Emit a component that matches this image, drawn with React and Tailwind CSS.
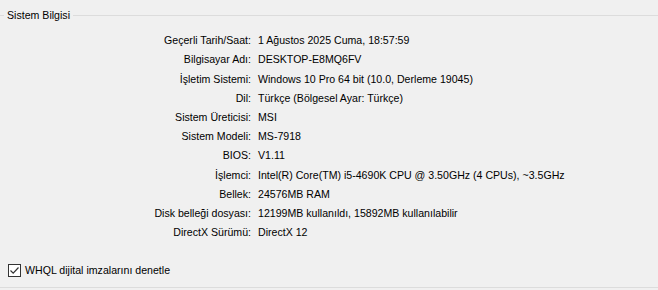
import React from "react";

const rows = [
  ["Geçerli Tarih/Saat:", "1 Ağustos 2025 Cuma, 18:57:59"],
  ["Bilgisayar Adı:", "DESKTOP-E8MQ6FV"],
  ["İşletim Sistemi:", "Windows 10 Pro 64 bit (10.0, Derleme 19045)"],
  ["Dil:", "Türkçe (Bölgesel Ayar: Türkçe)"],
  ["Sistem Üreticisi:", "MSI"],
  ["Sistem Modeli:", "MS-7918"],
  ["BIOS:", "V1.11"],
  ["İşlemci:", "Intel(R) Core(TM) i5-4690K CPU @ 3.50GHz (4 CPUs), ~3.5GHz"],
  ["Bellek:", "24576MB RAM"],
  ["Disk belleği dosyası:", "12199MB kullanıldı, 15892MB kullanılabilir"],
  ["DirectX Sürümü:", "DirectX 12"],
];

const App = () => {
  return (
    <div className="w-[658px] h-[290px] bg-[#f0f0f0] text-black text-[10.6px] leading-none overflow-hidden flex flex-col" style={{ fontFamily: "'Liberation Sans', Arial, sans-serif" }}>
      {/* group box header */}
      <div className="flex items-center h-[14px] mt-[8px] shrink-0">
        <div className="w-[4px] h-px bg-[#dcdcdc]" />
        <span className="px-[3px]">Sistem Bilgisi</span>
        <div className="flex-1 h-px bg-[#dcdcdc]" />
      </div>

      {/* info rows */}
      <div className="grid grid-cols-[251px_1fr] gap-x-[7px] mt-[9px]">
        {rows.map(([label, value]) => (
          <React.Fragment key={label}>
            <div className="text-right h-[19.2px] flex items-center justify-end">{label}</div>
            <div className="h-[19.2px] flex items-center">{value}</div>
          </React.Fragment>
        ))}
      </div>

      {/* checkbox */}
      <div className="flex items-center mt-[22px] ml-[8px]">
        <div className="w-[13px] h-[13px] border border-[#333] bg-white flex items-center justify-center">
          <svg width="11" height="11" viewBox="0 0 11 11">
            <path d="M1.5 5.5 L4.2 8.2 L9.5 2.5" fill="none" stroke="#333" strokeWidth="1.2" />
          </svg>
        </div>
        <span className="ml-[4px]">WHQL dijital imzalarını denetle</span>
      </div>

      <div className="mt-auto mb-[2px] h-px bg-[#dcdcdc]" />
    </div>
  );
};

export default App;
